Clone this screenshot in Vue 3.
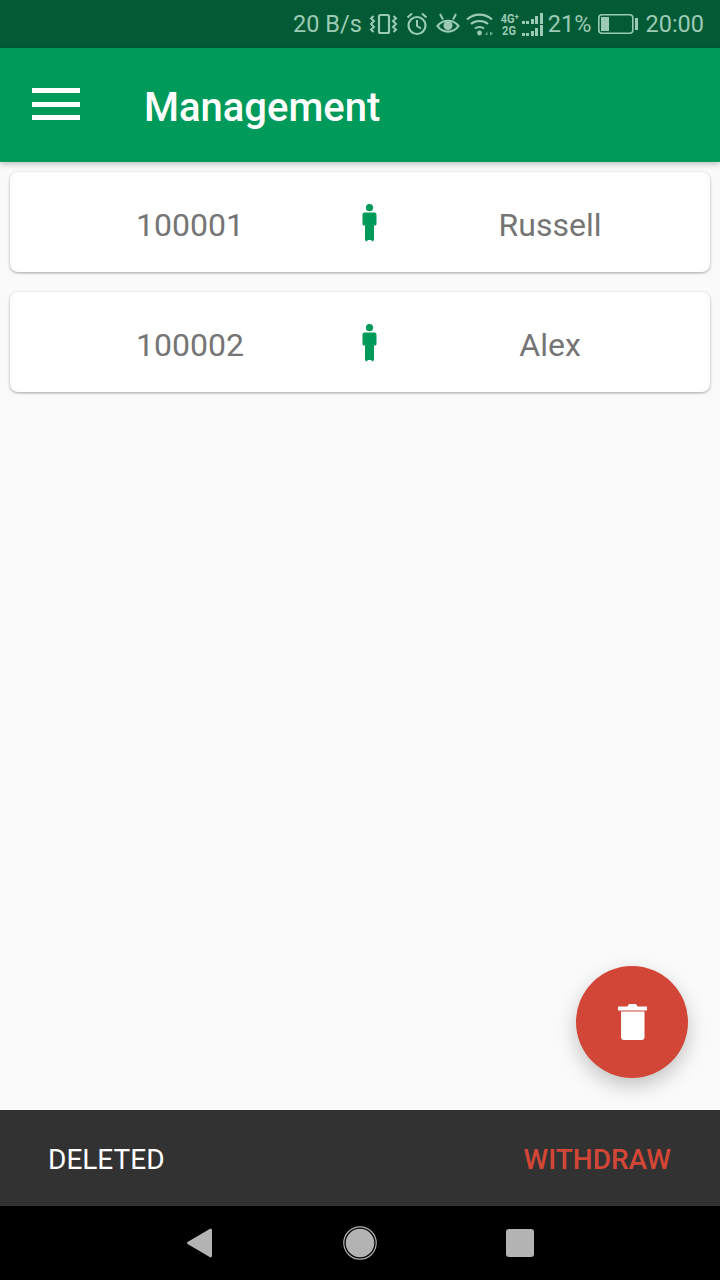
<template>
  <div class="screen">
    <div class="status-bar">
      <span class="status-text speed">20 B/s</span>
      <svg class="st-icon vibrate" width="29" height="26" viewBox="0 0 29 26">
        <rect x="10" y="4" width="10" height="18" rx="1.500" fill="none" stroke="#9ccab4" stroke-width="2.200" />
        <path d="M4.500 5l-2.500 2.500 3 2.500-3 3 3 3-3 2.500 2.500 2.500M24.500 5l2.500 2.500-3 2.500 3 3-3 3 3 2.500-2.500 2.500" fill="none" stroke="#9ccab4" stroke-width="2" />
      </svg>
      <svg class="st-icon alarm" width="22" height="26" viewBox="0 0 22 26">
        <circle cx="11" cy="14.500" r="8.500" fill="none" stroke="#9ccab4" stroke-width="2.200" />
        <path d="M11 9v6l4 2.500M1.500 6.500L6 2.500M20.500 6.500L16 2.500" fill="none" stroke="#9ccab4" stroke-width="2" />
      </svg>
      <svg class="st-icon eye" width="24" height="26" viewBox="0 0 24 26">
        <path d="M1.500 15c5-7 16-7 21 0-5 7.500-16 7.500-21 0z" fill="none" stroke="#9ccab4" stroke-width="2.200" />
        <circle cx="12" cy="14.500" r="4.500" fill="#9ccab4" />
        <path d="M4 3l3 5.500M20 3l-3 5.500" fill="none" stroke="#9ccab4" stroke-width="2" />
      </svg>
      <svg class="st-icon wifi" width="27" height="26" viewBox="0 0 27 26">
        <path d="M1 8.500c7-6.500 18-6.500 25 0M5 13c4.500-4 12.500-4 17 0M9 17.500c2.500-2 6.500-2 9 0" fill="none" stroke="#9ccab4" stroke-width="2.200" />
        <circle cx="13.500" cy="22" r="2.400" fill="#9ccab4" />
        <path d="M19 24l2.500-3.500v3.500zM24 20.500l3 2-3 2z" fill="#6fae92" />
      </svg>
      <div class="signal">
        <div class="signal-row">
          <span class="net">4G⁺</span>
          <span class="bars">
            <i style="height: 3px"></i><i style="height: 3px"></i><i style="height: 5px"></i><i style="height: 8px"></i><i style="height: 11px"></i>
          </span>
        </div>
        <div class="signal-row">
          <span class="net">2G</span>
          <span class="bars">
            <i style="height: 3px"></i><i style="height: 3px"></i><i style="height: 5px"></i><i style="height: 8px"></i><i style="height: 11px"></i>
          </span>
        </div>
      </div>
      <span class="status-text pct">21%</span>
      <svg class="st-icon battery" width="40" height="26" viewBox="0 0 40 26">
        <rect x="0.800" y="3.800" width="34" height="18.400" rx="3" fill="none" stroke="#9ccab4" stroke-width="1.600" />
        <rect x="3" y="6" width="8" height="14" fill="#9ccab4" />
        <rect x="37" y="7" width="3" height="12" fill="#9ccab4" />
      </svg>
      <span class="status-text">20:00</span>
    </div>

    <header class="app-bar">
      <div class="menu-icon"><span></span><span></span><span></span></div>
      <h1 class="title">Management</h1>
    </header>

    <main class="content">
      <div v-for="user in users" :key="user.id" class="card">
        <span class="cell">{{ user.id }}</span>
        <span class="cell">
          <svg class="person" width="16" height="38" viewBox="0 0 16 38">
            <circle cx="7.500" cy="3.700" r="3.600" fill="#009a5a" />
            <path d="M2.500 8.500h10q2 0 2 2v9.500q0 1.500-1.500 1.500h-1v14.500l-1.500 1.500-1.500-1.500h-3l-1.500 1.500-1.500-1.500v-14.500h-1q-1.500 0-1.500-1.500v-9.500q0-2 2-2z" fill="#009a5a" />
          </svg>
        </span>
        <span class="cell">{{ user.name }}</span>
      </div>
    </main>

    <button class="fab" type="button">
      <svg width="29" height="36" viewBox="0 0 29 36">
        <path d="M0 2.500h9.500l1.500-2.500h7l1.500 2.500h9.500v4h-29z" fill="#fff" />
        <path d="M3 7.500h23.500v25.500q0 3-3 3h-17.500q-3 0-3-3z" fill="#fff" />
      </svg>
    </button>

    <div class="snackbar">
      <span class="snack-text">DELETED</span>
      <span class="snack-action">WITHDRAW</span>
    </div>

    <nav class="nav-bar">
      <svg width="28" height="32" viewBox="0 0 28 32">
        <path d="M26 2.500v27l-1.500 1-23-13.500q-1-1 0-2l23-13.500z" fill="#b3b3b3" />
      </svg>
      <svg width="34" height="34" viewBox="0 0 34 34">
        <circle cx="17" cy="17" r="16.200" fill="none" stroke="#b3b3b3" stroke-width="1.200" />
        <circle cx="17" cy="17" r="14.300" fill="#b3b3b3" />
      </svg>
      <div class="nav-square"></div>
    </nav>
  </div>
</template>

<script setup>
const users = [
  { id: '100001', name: 'Russell' },
  { id: '100002', name: 'Alex' }
];
</script>

<style>
body {
  margin: 0;
}
</style>

<style scoped>
.screen {
  position: relative;
  width: 720px;
  height: 1280px;
  display: flex;
  flex-direction: column;
  background: #fafafa;
  font-family: Roboto, "Liberation Sans", sans-serif;
  overflow: hidden;
}

.status-bar {
  height: 48px;
  flex: none;
  display: flex;
  align-items: center;
  justify-content: flex-end;
  padding-right: 16px;
  background: #035b36;
  color: #9ccab4;
}

.status-text {
  font-size: 23.5px;
  line-height: 48px;
}

.st-icon {
  flex: none;
  margin-left: 8px;
}

.vibrate {
  margin-left: 7px;
}

.wifi {
  margin-left: 6px;
}

.battery {
  margin: 0 7px;
}

.signal {
  display: flex;
  flex-direction: column;
  margin: 0 5px;
  width: 45px;
}

.signal-row {
  display: flex;
  align-items: flex-end;
  justify-content: space-between;
  height: 11.500px;
}

.net {
  width: 18px;
  font-size: 13px;
  line-height: 11px;
  font-weight: 700;
  text-align: right;
  white-space: nowrap;
  transform: scaleX(0.85);
  transform-origin: right center;
}

.bars {
  display: flex;
  align-items: flex-end;
  gap: 1.500px;
}

.bars i {
  display: block;
  width: 3px;
  background: #9ccab4;
}

.app-bar {
  height: 114px;
  flex: none;
  display: flex;
  align-items: center;
  background: #009a5a;
  box-shadow: 0 2px 6px rgba(0, 0, 0, 0.25);
  z-index: 1;
}

.menu-icon {
  width: 48px;
  margin: 0 0 2px 32px;
  display: flex;
  flex-direction: column;
  gap: 8.500px;
}

.menu-icon span {
  display: block;
  height: 5px;
  background: #fff;
}

.title {
  margin: 4px 0 0 64px;
  font-size: 40px;
  font-weight: 500;
  color: #fff;
}

.content {
  flex: 1;
  display: flex;
  flex-direction: column;
  gap: 20px;
  padding: 10px;
}

.card {
  height: 100px;
  box-sizing: border-box;
  padding: 6px 70px 0 90px;
  display: grid;
  grid-template-columns: repeat(3, 1fr);
  align-items: center;
  background: #fff;
  border-radius: 8px;
  box-shadow: 0 1px 3px rgba(0, 0, 0, 0.35);
  font-size: 32px;
  color: #757575;
}

.cell {
  display: flex;
  justify-content: center;
}

.person {
  margin-top: -4px;
}

.fab {
  position: absolute;
  left: 576px;
  top: 966px;
  width: 112px;
  height: 112px;
  padding: 0;
  border: none;
  border-radius: 50%;
  display: flex;
  align-items: center;
  justify-content: center;
  background: #d24638;
  box-shadow: 0 8px 20px rgba(0, 0, 0, 0.22);
}

.snackbar {
  height: 96px;
  box-sizing: border-box;
  flex: none;
  display: flex;
  align-items: center;
  justify-content: space-between;
  padding: 2px 49px 0 48px;
  background: #323232;
  font-size: 28px;
}

.snack-text {
  color: #fff;
}

.snack-action {
  color: #d24638;
  font-weight: 500;
}

.nav-bar {
  height: 74px;
  flex: none;
  display: flex;
  align-items: center;
  justify-content: space-between;
  padding: 0 186px;
  background: #000;
}

.nav-square {
  width: 28px;
  height: 28px;
  border-radius: 3px;
  background: #b3b3b3;
}
</style>
